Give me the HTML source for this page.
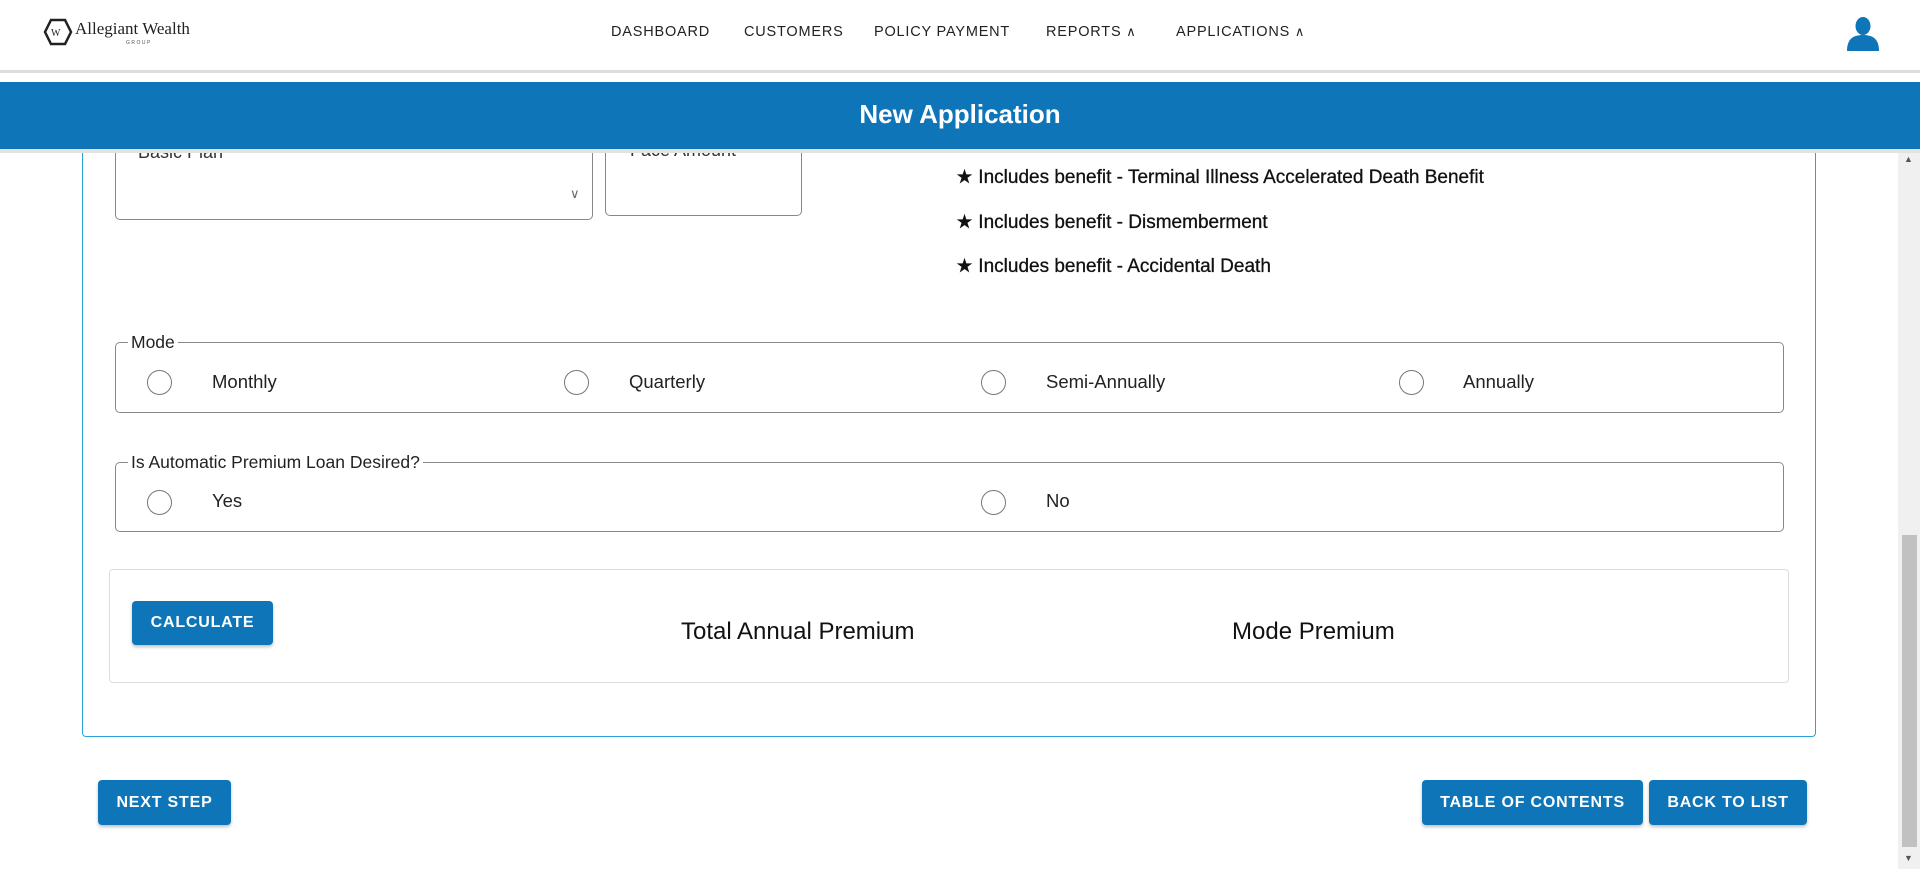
<!DOCTYPE html>
<html><head><meta charset="utf-8"><style>
*{box-sizing:border-box;margin:0;padding:0}
body{width:1920px;height:869px;overflow:hidden;background:#fff;font-family:"Liberation Sans",sans-serif;color:#111;position:relative}
.abs{position:absolute}
.nav{left:0;top:0;width:1920px;height:73px;background:#fff;border-bottom:3px solid #ddd}
.navi{top:24px;font-size:14.5px;letter-spacing:.8px;color:#222;font-weight:500}
.blue{left:0;top:82px;width:1920px;height:67px;background:#0e76b8;box-shadow:0 4px 0 #e2e2e2}
.blue div{position:absolute;left:0;right:0;top:17px;text-align:center;color:#fff;font-weight:bold;font-size:26px}
.card{left:82px;top:100px;width:1734px;height:637px;border:1.5px solid #29a3dc;border-top:none;border-radius:0 0 4px 4px}
.box{border:1px solid #888;border-radius:5px}
.star{left:956px;font-size:19px;color:#111;-webkit-text-stroke:.3px #111}
fieldset.f{position:absolute;border:1px solid #888;border-radius:5px;padding:0}
fieldset.f legend{font-size:17.5px;margin-left:12px;padding:0 3px;color:#222}
.r{position:absolute;width:25px;height:25px;border:1.5px solid #777;border-radius:50%}
.rl{position:absolute;font-size:18.5px;color:#222}
.btn{position:absolute;background:#0e76b8;color:#fff;font-weight:bold;font-size:16px;letter-spacing:.8px;border-radius:4px;text-align:center;box-shadow:0 2px 3px rgba(0,0,0,.25)}
</style></head><body>
<div class="abs nav"></div>
<svg class="abs" style="left:43px;top:18px" width="30" height="28" viewBox="0 0 30 28"><polygon points="8,2 22,2 28,14 22,26 8,26 2,14" fill="none" stroke="#222" stroke-width="2.5"/><text x="8" y="18" font-size="10" font-family="Liberation Serif" fill="#222">W</text></svg>
<div class="abs" style="left:75px;top:19px;font-family:'Liberation Serif',serif;font-size:17px;color:#222">Allegiant Wealth</div>
<div class="abs" style="left:126px;top:40px;font-size:5px;letter-spacing:1.5px;color:#555">GROUP</div>
<div class="abs navi" style="left:611px">DASHBOARD</div>
<div class="abs navi" style="left:744px">CUSTOMERS</div>
<div class="abs navi" style="left:874px">POLICY PAYMENT</div>
<div class="abs navi" style="left:1046px">REPORTS <span style="font-size:13px">&#x2227;</span></div>
<div class="abs navi" style="left:1176px">APPLICATIONS <span style="font-size:13px">&#x2227;</span></div>
<svg class="abs" style="left:1845px;top:16px" width="36" height="36" viewBox="0 0 36 36"><ellipse cx="18" cy="10" rx="7.5" ry="9" fill="#0e76b8"/><path d="M2 35 C2 23 8 19 18 19 C28 19 34 23 34 35 Z" fill="#0e76b8"/></svg>

<div class="abs card"></div>
<div class="abs box" style="left:115px;top:110px;width:478px;height:110px"></div>
<div class="abs" style="left:138px;top:142px;font-size:18px;color:#333">Basic Plan</div>
<div class="abs" style="left:570px;top:186px;font-size:13px;color:#666">&#x2228;</div>
<div class="abs box" style="left:605px;top:110px;width:197px;height:106px"></div>
<div class="abs" style="left:630px;top:140px;font-size:18px;color:#333">Face Amount</div>
<div class="abs star" style="top:166px">&#9733; Includes benefit - Terminal Illness Accelerated Death Benefit</div>
<div class="abs star" style="top:211px">&#9733; Includes benefit - Dismemberment</div>
<div class="abs star" style="top:255px">&#9733; Includes benefit - Accidental Death</div>

<fieldset class="f" style="left:115px;top:332px;width:1669px;height:81px"><legend>Mode</legend></fieldset>
<div class="r" style="left:147px;top:370px"></div><div class="rl" style="left:212px;top:371px">Monthly</div>
<div class="r" style="left:564px;top:370px"></div><div class="rl" style="left:629px;top:371px">Quarterly</div>
<div class="r" style="left:981px;top:370px"></div><div class="rl" style="left:1046px;top:371px">Semi-Annually</div>
<div class="r" style="left:1399px;top:370px"></div><div class="rl" style="left:1463px;top:371px">Annually</div>

<fieldset class="f" style="left:115px;top:452px;width:1669px;height:80px"><legend>Is Automatic Premium Loan Desired?</legend></fieldset>
<div class="r" style="left:147px;top:490px"></div><div class="rl" style="left:212px;top:490px">Yes</div>
<div class="r" style="left:981px;top:490px"></div><div class="rl" style="left:1046px;top:490px">No</div>

<div class="abs" style="left:109px;top:569px;width:1680px;height:114px;border:1px solid #ddd;border-radius:4px"></div>
<div class="btn" style="left:132px;top:601px;width:141px;height:44px;line-height:44px">CALCULATE</div>
<div class="abs" style="left:681px;top:618px;font-size:24px">Total Annual Premium</div>
<div class="abs" style="left:1232px;top:618px;font-size:24px">Mode Premium</div>

<div class="btn" style="left:98px;top:780px;width:133px;height:45px;line-height:45px">NEXT STEP</div>
<div class="btn" style="left:1422px;top:780px;width:221px;height:45px;line-height:45px">TABLE OF CONTENTS</div>
<div class="btn" style="left:1649px;top:780px;width:158px;height:45px;line-height:45px">BACK TO LIST</div>

<div class="abs blue"><div>New Application</div></div>
<div class="abs" style="left:1898px;top:153px;width:22px;height:716px;background:#f0f0f0"></div>
<div class="abs" style="left:1904px;top:154px;font-size:9px;color:#555">&#9650;</div>
<div class="abs" style="left:1902px;top:535px;width:15px;height:312px;background:#c1c1c1"></div>
<div class="abs" style="left:1904px;top:853px;font-size:9px;color:#555">&#9660;</div>
</body></html>
